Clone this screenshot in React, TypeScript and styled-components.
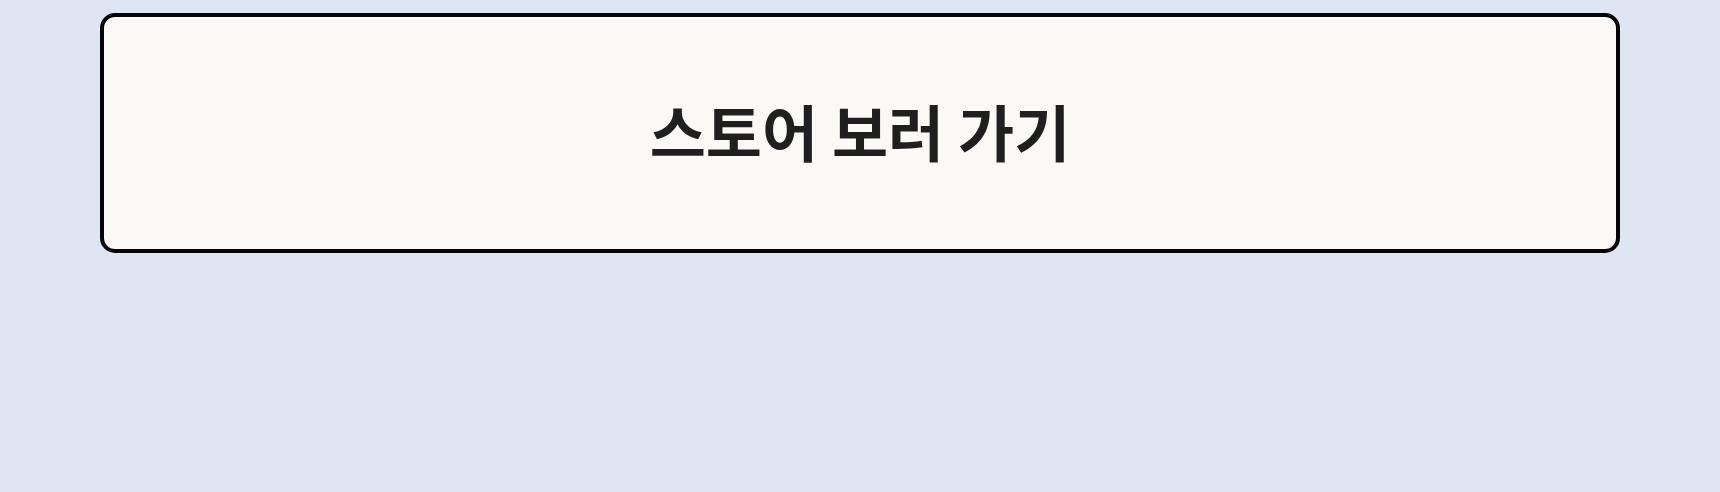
import styled, { createGlobalStyle } from "styled-components";

const GlobalStyle = createGlobalStyle`
  html, body {
    margin: 0;
    padding: 0;
    background: #dfe6f3;
  }
  body {
    font-family: "Noto Sans CJK KR", "Noto Sans", sans-serif;
  }
`;

const Page = styled.div`
  box-sizing: border-box;
  width: 100%;
  height: 492px;
  padding: 13px 100px 0;
`;

const StoreButton = styled.button`
  box-sizing: border-box;
  display: flex;
  align-items: center;
  justify-content: center;
  width: 100%;
  height: 240px;
  padding: 0 0 4px;
  border: 4px solid #050505;
  border-radius: 15px;
  background-color: #faf9f6;
  color: #1f1f1f;
  font-family: "Noto Sans CJK KR", "Noto Sans", sans-serif;
  font-size: 61px;
  font-weight: 700;
  line-height: 1.2;
  cursor: pointer;
`;

export default function App() {
  return (
    <>
      <GlobalStyle />
      <Page>
        <StoreButton>스토어 보러 가기</StoreButton>
      </Page>
    </>
  );
}
